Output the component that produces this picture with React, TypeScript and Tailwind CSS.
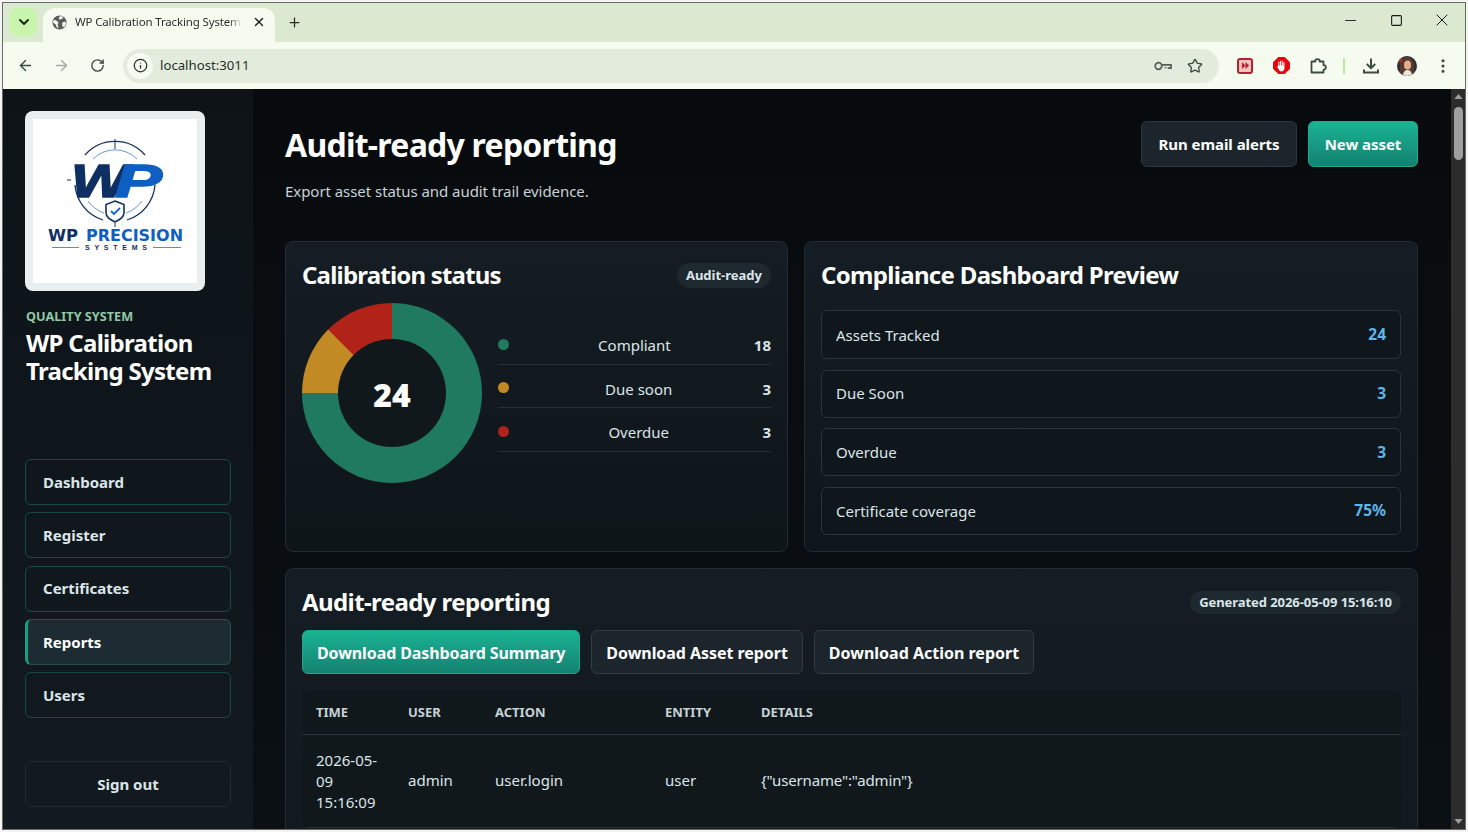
import { ArrowLeft, ArrowRight, ChevronDown, EllipsisVertical, Info, Minus, Plus, RotateCw, Square, Star, X } from 'lucide-react';

const navItems = ['Dashboard', 'Register', 'Certificates', 'Reports', 'Users'];

const legend = [
  { label: 'Compliant', value: '18', dot: 'bg-[#1f7a5f]' },
  { label: 'Due soon', value: '3', dot: 'bg-[#c28a25]' },
  { label: 'Overdue', value: '3', dot: 'bg-[#b12318]' },
];

const metrics = [
  { label: 'Assets Tracked', value: '24', height: 'h-[49px] pt-[1px]' },
  { label: 'Due Soon', value: '3', height: 'h-[48px]' },
  { label: 'Overdue', value: '3', height: 'h-[48px]' },
  { label: 'Certificate coverage', value: '75%', height: 'h-[48px]' },
];

function BrowserChrome() {
  return (
    <div className="shrink-0">
      <div className="flex h-[39px] items-end bg-[#dbe9d0] pl-[7px]">
        <div className="mb-[6px] flex h-[28px] w-[27px] items-center justify-center rounded-lg bg-[#c8f5ac]">
          <ChevronDown className="h-4 w-4 text-[#1c2a18]" strokeWidth={3} />
        </div>
        <div className="ml-[6px] flex h-[34px] w-[232px] items-center rounded-t-xl bg-[#f6fbf0] pb-[6px] pl-[9px] pr-[9px]">
          <svg viewBox="0 0 16 16" className="h-[15px] w-[15px] shrink-0">
            <circle cx="8" cy="8" r="7.5" fill="#565c5a" />
            <path d="M2 5l3 1 2 2-1 2 1 4-2-1-1-3-3-2zM9 1l3 1-1 2-3 1-1-2zM11 8l3-1 1 2-2 4-2-1z" fill="#f6fbf0" />
          </svg>
          <span className="ml-[8px] w-[167px] overflow-hidden whitespace-nowrap text-[11.5px] tracking-[-0.15px] text-[#27302a] [mask-image:linear-gradient(to_right,black_92%,transparent)]">WP Calibration Tracking System</span>
          <X className="ml-[10px] h-[14px] w-[14px] text-[#1f2a20]" strokeWidth={2.5} />
        </div>
        <Plus className="mb-[12px] ml-[12px] h-[15px] w-[15px] text-[#27302a]" strokeWidth={2} />
        <div className="mb-[12px] ml-auto flex items-center gap-[30px] pr-[15px] text-[#1a1a1a]">
          <div className="flex w-4 justify-center"><Minus className="h-[17px] w-[17px] shrink-0" strokeWidth={1.3} /></div>
          <div className="flex w-4 justify-center"><Square className="h-[13px] w-[13px] shrink-0" strokeWidth={2} /></div>
          <div className="flex w-4 justify-center"><X className="h-[20px] w-[20px] shrink-0" strokeWidth={1.2} /></div>
        </div>
      </div>
      <div className="flex h-[47px] items-center bg-[#f6fbf0] pl-[14px] pr-[13px] text-[#3c4a3e]">
        <ArrowLeft className="h-[17px] w-[17px]" strokeWidth={2} />
        <ArrowRight className="ml-[19px] h-[17px] w-[17px] text-[#a4aca0]" strokeWidth={2} />
        <RotateCw className="ml-[20px] h-[15px] w-[15px]" strokeWidth={2.2} />
        <div className="ml-[18px] flex h-[34px] w-[1096px] items-center rounded-full bg-[#e3ecdc] pl-[4px] pr-[16px]">
          <div className="flex h-[26px] w-[26px] items-center justify-center rounded-full bg-[#f6fbf0]">
            <Info className="h-[15px] w-[15px] text-[#26302a]" strokeWidth={2} />
          </div>
          <span className="ml-[7px] text-[13.2px] text-[#27302a]">localhost:3011</span>
          <svg viewBox="0 0 18 10" className="ml-auto h-[10px] w-[18px] text-[#565e58]" fill="none" stroke="currentColor" strokeWidth="1.7">
            <circle cx="4.500" cy="5" r="3.300" />
            <path d="M8 3.800h9v3.400h-2.500v-1M11.500 7.200V6" />
          </svg>
          <Star className="ml-[15px] h-[16px] w-[16px]" strokeWidth={2} />
        </div>
        <div className="ml-[18px] flex h-[16px] w-[16px] items-center justify-center rounded-[3px] border-2 border-[#b5222c] bg-[#f3c3c3]">
          <svg viewBox="0 0 10 10" className="h-[9px] w-[9px]"><path d="M1 1l4 4-4 4zM5 1l4 4-4 4z" fill="#b5222c" /></svg>
        </div>
        <svg viewBox="0 0 16 16" className="ml-[20px] h-[17px] w-[17px]">
          <path d="M5 0h6l5 5v6l-5 5H5l-5-5V5z" fill="#e5060f" />
          <path d="M5 8V4.500h1V8h.6V3.500h1V8h.6V3.500h1V8h.6V5h1v6l-1.500 2.500H6.500L4 9.500l.5-1z" fill="#fff" />
        </svg>
        <svg viewBox="0 0 18 18" className="ml-[19px] h-[18px] w-[18px]" fill="none" stroke="currentColor" strokeWidth="1.8" strokeLinejoin="round">
          <path d="M2.500 4.500h3.700a2.300 2.300 0 0 1 4.600 0h3.700v3.700a2.300 2.300 0 0 1 0 4.600v2.700h-12z" />
        </svg>
        <div className="ml-[16px] h-[16px] w-[2px] bg-[#bce8a4]" />
        <svg viewBox="0 0 18 18" className="ml-[17px] h-[18px] w-[18px]" fill="none" stroke="currentColor" strokeWidth="2">
          <path d="M9 1.500v9.500M4.800 7l4.200 4.200L13.200 7M2 12.500v3h14v-3" />
        </svg>
        <svg viewBox="0 0 20 20" className="ml-[17px] h-[20px] w-[20px] rounded-full bg-[#2a2f38]">
          <path d="M3 20V8c0-4 3-7 7-7s6 3 7 7v12z" fill="#5a3a2c" />
          <ellipse cx="10.500" cy="9" rx="3.500" ry="4.500" fill="#e3b08f" />
          <path d="M6 20c0-4 2-6 4.500-6s4.500 2 4.500 6z" fill="#e8e4e0" />
          <path d="M2 3l3-1 0 4-3 1z" fill="#a0332c" />
        </svg>
        <EllipsisVertical className="ml-[17px] h-[18px] w-[18px]" strokeWidth={2.2} />
      </div>
    </div>
  );
}

function Logo() {
  return (
    <div className="h-[180px] w-[180px] rounded-lg bg-[#e9eeee] p-[8px]">
      <svg viewBox="0 0 164 164" className="h-full w-full bg-white">
        <path d="M52 36A40 40 0 0 1 112 36" fill="none" stroke="#12305f" strokeWidth="1.3" />
        <path d="M42 66A40 40 0 0 0 70 101M94 101A40 40 0 0 0 122 66" fill="none" stroke="#12305f" strokeWidth="1.3" />
        <path d="M60 40A31 31 0 0 1 104 40M55 82A33 33 0 0 0 71 94M93 94A33 33 0 0 0 109 82" fill="none" stroke="#3b7fd0" strokeWidth="0.8" />
        <path d="M82 20v10M34 61h4M124 61h2M82 104v4" stroke="#12305f" strokeWidth="1" />
        <text x="38" y="78" fontFamily="'Liberation Sans', sans-serif" fontWeight="700" fontStyle="italic" fontSize="47" fill="#0f2f63" stroke="#0f2f63" strokeWidth="1.5" textLength="57" lengthAdjust="spacingAndGlyphs">W</text>
        <text x="82" y="78" fontFamily="'Liberation Sans', sans-serif" fontWeight="700" fontStyle="italic" fontSize="47" fill="#0f5fc2" stroke="#0f5fc2" strokeWidth="1.5" textLength="47" lengthAdjust="spacingAndGlyphs">P</text>
        <path d="M82 82l9 3.500v8c0 5-4 7-9 9.500-5-2.500-9-4.500-9-9.500v-8z" fill="#fff" stroke="#12305f" strokeWidth="1.6" />
        <path d="M78 92l3 3 6-6" fill="none" stroke="#1467c8" strokeWidth="1.8" />
        <text x="15" y="122" fontFamily="'DejaVu Sans', sans-serif" fontWeight="700" fontSize="16" fill="#0f2f63" textLength="30" lengthAdjust="spacingAndGlyphs">WP</text>
        <text x="53" y="122" fontFamily="'DejaVu Sans', sans-serif" fontWeight="700" fontSize="16" fill="#0f5fc2" textLength="97" lengthAdjust="spacingAndGlyphs">PRECISION</text>
        <text x="52" y="131" fontFamily="'Liberation Sans', sans-serif" fontWeight="700" fontSize="7" fill="#12305f" textLength="62" lengthAdjust="spacing">SYSTEMS</text>
        <path d="M19 128.500h27M120 128.500h28" stroke="#2c6fc0" strokeWidth="0.8" />
      </svg>
    </div>
  );
}

function Sidebar() {
  return (
    <aside className="flex h-full w-[250px] shrink-0 flex-col bg-gradient-to-b from-[#0d1317] to-[#121a20] px-[22px] pt-[22px]">
      <Logo />
      <div className="mt-[17px] pl-[1px] text-[12.700px] font-bold leading-[16px] text-[#90c9a6]">QUALITY SYSTEM</div>
      <div className="mt-[5px] pl-[1px] text-[24px] font-bold leading-[28px] tracking-[-0.7px] text-white">WP Calibration Tracking System</div>
      <nav className="mt-[74px] flex flex-col gap-[7.250px]">
        {navItems.map((item) => (
          <div
            key={item}
            className={
              item === 'Reports'
                ? 'flex h-[46px] items-center rounded-md border border-[#25504e] border-l-[3px] border-l-[#1a9c80] bg-[#1d2c33] pl-[15px] text-[15px] font-bold text-white'
                : 'flex h-[46px] items-center rounded-md border border-[#174a42] pl-[17px] text-[15px] font-bold text-[#dbe5e8]'
            }
          >
            {item}
          </div>
        ))}
      </nav>
      <div className="mt-[43px] flex h-[46px] items-center justify-center rounded-md border border-[#232c32] text-[15px] font-bold text-[#dbe5e8]">Sign out</div>
    </aside>
  );
}

function CalibrationCard() {
  return (
    <section className="h-[311px] rounded-lg border border-[#232c33] bg-gradient-to-b from-[#151d24] to-[#0e1519] px-[16px] pt-[15px]">
      <div className="flex items-center justify-between">
        <h2 className="text-[24px] font-bold leading-[36px] tracking-[-0.8px] text-white">Calibration status</h2>
        <span className="rounded-full bg-[#1e292f] px-[9px] py-[2.500px] text-[13px] font-bold leading-[20px] text-[#dbe5e8]">Audit-ready</span>
      </div>
      <div className="mt-[10px] flex gap-[16px]">
        <div className="flex h-[180px] w-[180px] shrink-0 items-center justify-center rounded-full bg-[conic-gradient(#1f7a5f_0deg_270deg,#c28a25_270deg_315deg,#b12318_315deg_360deg)]">
          <div className="flex h-[108px] w-[108px] items-center justify-center rounded-full bg-[#10181c] pt-[3px] text-[32px] font-black text-white">24</div>
        </div>
        <div className="mt-[18px] flex-1">
          {legend.map((row) => (
            <div key={row.label} className="flex h-[43.500px] items-center border-b border-[#263038] pt-[6px] text-[15px] text-[#dbe5e8]">
              <span className={`-mt-[2px] h-[11px] w-[11px] rounded-full ${row.dot}`} />
              <span className="flex-1 pl-[6px] text-center">{row.label}</span>
              <span className="font-bold">{row.value}</span>
            </div>
          ))}
        </div>
      </div>
    </section>
  );
}

function ComplianceCard() {
  return (
    <section className="h-[311px] rounded-lg border border-[#232c33] bg-gradient-to-b from-[#151d24] to-[#0f161b] px-[16px] pt-[15px]">
      <h2 className="text-[24px] font-bold leading-[36px] tracking-[-0.68px] text-white">Compliance Dashboard Preview</h2>
      <div className="mt-[17px] flex flex-col gap-[10.700px]">
        {metrics.map((m) => (
          <div key={m.label} className={`flex items-center justify-between rounded-md border border-[#2a343b] bg-[#10171c] px-[14px] text-[15px] text-[#dbe5e8] ${m.height}`}>
            <span>{m.label}</span>
            <span className="text-[15.500px] font-bold text-[#5bb6ea]">{m.value}</span>
          </div>
        ))}
      </div>
    </section>
  );
}

function ReportCard() {
  return (
    <section className="mt-[16px] rounded-lg border border-[#232c33] bg-gradient-to-b from-[#151d24] to-[#121a20] px-[16px] pb-[16px] pt-[15px]">
      <div className="flex items-center justify-between">
        <h2 className="text-[24px] font-bold leading-[36px] tracking-[-0.6px] text-white">Audit-ready reporting</h2>
        <span className="rounded-full bg-[#1e292f] px-[9px] py-[1.500px] text-[13px] font-bold leading-[20px] tracking-[-0.07px] text-[#dbe5e8]">Generated 2026-05-09 15:16:10</span>
      </div>
      <div className="mt-[10px] flex gap-[11px]">
        <button className="h-[44px] rounded-md border border-[#22a98b] bg-gradient-to-b from-[#1bb394] to-[#148270] px-[14px] pt-[1px] text-[16px] font-bold tracking-[-0.1px] text-white">Download Dashboard Summary</button>
        <button className="h-[44px] rounded-md border border-[#313c44] bg-[#1c252c] px-[14px] pt-[1px] text-[16px] font-bold tracking-[-0.05px] text-white">Download Asset report</button>
        <button className="h-[44px] rounded-md border border-[#313c44] bg-[#1c252c] px-[14px] pt-[1px] text-[16px] font-bold text-white">Download Action report</button>
      </div>
      <div className="mt-[16px] overflow-hidden rounded-lg bg-[#11181c]">
        <table className="w-full table-fixed border-collapse text-left">
          <colgroup>
            <col className="w-[92px]" />
            <col className="w-[87px]" />
            <col className="w-[170px]" />
            <col className="w-[96px]" />
            <col />
          </colgroup>
          <thead>
            <tr className="h-[44px] border-b border-[#263038] text-[13px] font-bold text-[#c6d2d6]">
              <th className="pl-[14px] pt-[2px]">TIME</th>
              <th className="pl-[14px] pt-[2px]">USER</th>
              <th className="pl-[14px] pt-[2px]">ACTION</th>
              <th className="pl-[14px] pt-[2px]">ENTITY</th>
              <th className="pl-[14px] pt-[2px]">DETAILS</th>
            </tr>
          </thead>
          <tbody className="text-[15px] leading-[21px] text-[#dbe5e8]">
            <tr className="border-b border-[#263038]">
              <td className="pb-[14px] pl-[14px] pt-[15px]">2026-05-09 15:16:09</td>
              <td className="pl-[14px]">admin</td>
              <td className="pl-[14px]">user.login</td>
              <td className="pl-[14px]">user</td>
              <td className="pl-[14px] tracking-[-0.15px]">{'{"username":"admin"}'}</td>
            </tr>
          </tbody>
        </table>
      </div>
    </section>
  );
}

export default function App() {
  return (
    <div className="h-[832px] w-[1468px] overflow-hidden bg-[#f4f4f4] p-[2px] font-['Noto_Sans',sans-serif]">
      <div className="flex h-full flex-col overflow-hidden border border-[#666b66]">
        <BrowserChrome />
        <div className="flex min-h-0 flex-1 bg-[#080b0e]">
          <Sidebar />
          <main className="min-w-0 flex-1 overflow-hidden bg-gradient-to-b from-[#080b0e] to-[#0b1014] pl-[32px] pr-[33px] pt-[32px]">
            <div className="flex items-start justify-between">
              <div>
                <h1 className="text-[32px] font-bold leading-[48px] tracking-[-0.75px] text-white">Audit-ready reporting</h1>
                <p className="mt-[10px] text-[15px] leading-[24px] tracking-[-0.05px] text-[#c6d2d6]">Export asset status and audit trail evidence.</p>
              </div>
              <div className="flex gap-[11px]">
                <button className="h-[46px] w-[156px] rounded-md border border-[#2c363e] bg-[#1c252c] text-[15px] font-bold tracking-[-0.05px] text-white">Run email alerts</button>
                <button className="h-[46px] w-[110px] rounded-md border border-[#22a98b] bg-gradient-to-b from-[#1bb394] to-[#148270] text-[15px] font-bold tracking-[-0.05px] text-white">New asset</button>
              </div>
            </div>
            <div className="mt-[38px] grid grid-cols-[503px_614px] gap-[16px]">
              <CalibrationCard />
              <ComplianceCard />
            </div>
            <ReportCard />
          </main>
          <div className="flex w-[14px] shrink-0 flex-col items-center bg-[#2c2c2c]">
            <svg viewBox="0 0 10 6" className="mt-[5px] h-[5px] w-[9px]"><path d="M5 0l5 6H0z" fill="#9c9c9c" /></svg>
            <div className="mt-[8px] h-[53px] w-[9px] rounded-full bg-[#9f9f9f]" />
            <svg viewBox="0 0 10 6" className="mb-[5px] mt-auto h-[5px] w-[9px]"><path d="M5 6l5-6H0z" fill="#9c9c9c" /></svg>
          </div>
        </div>
      </div>
    </div>
  );
}
